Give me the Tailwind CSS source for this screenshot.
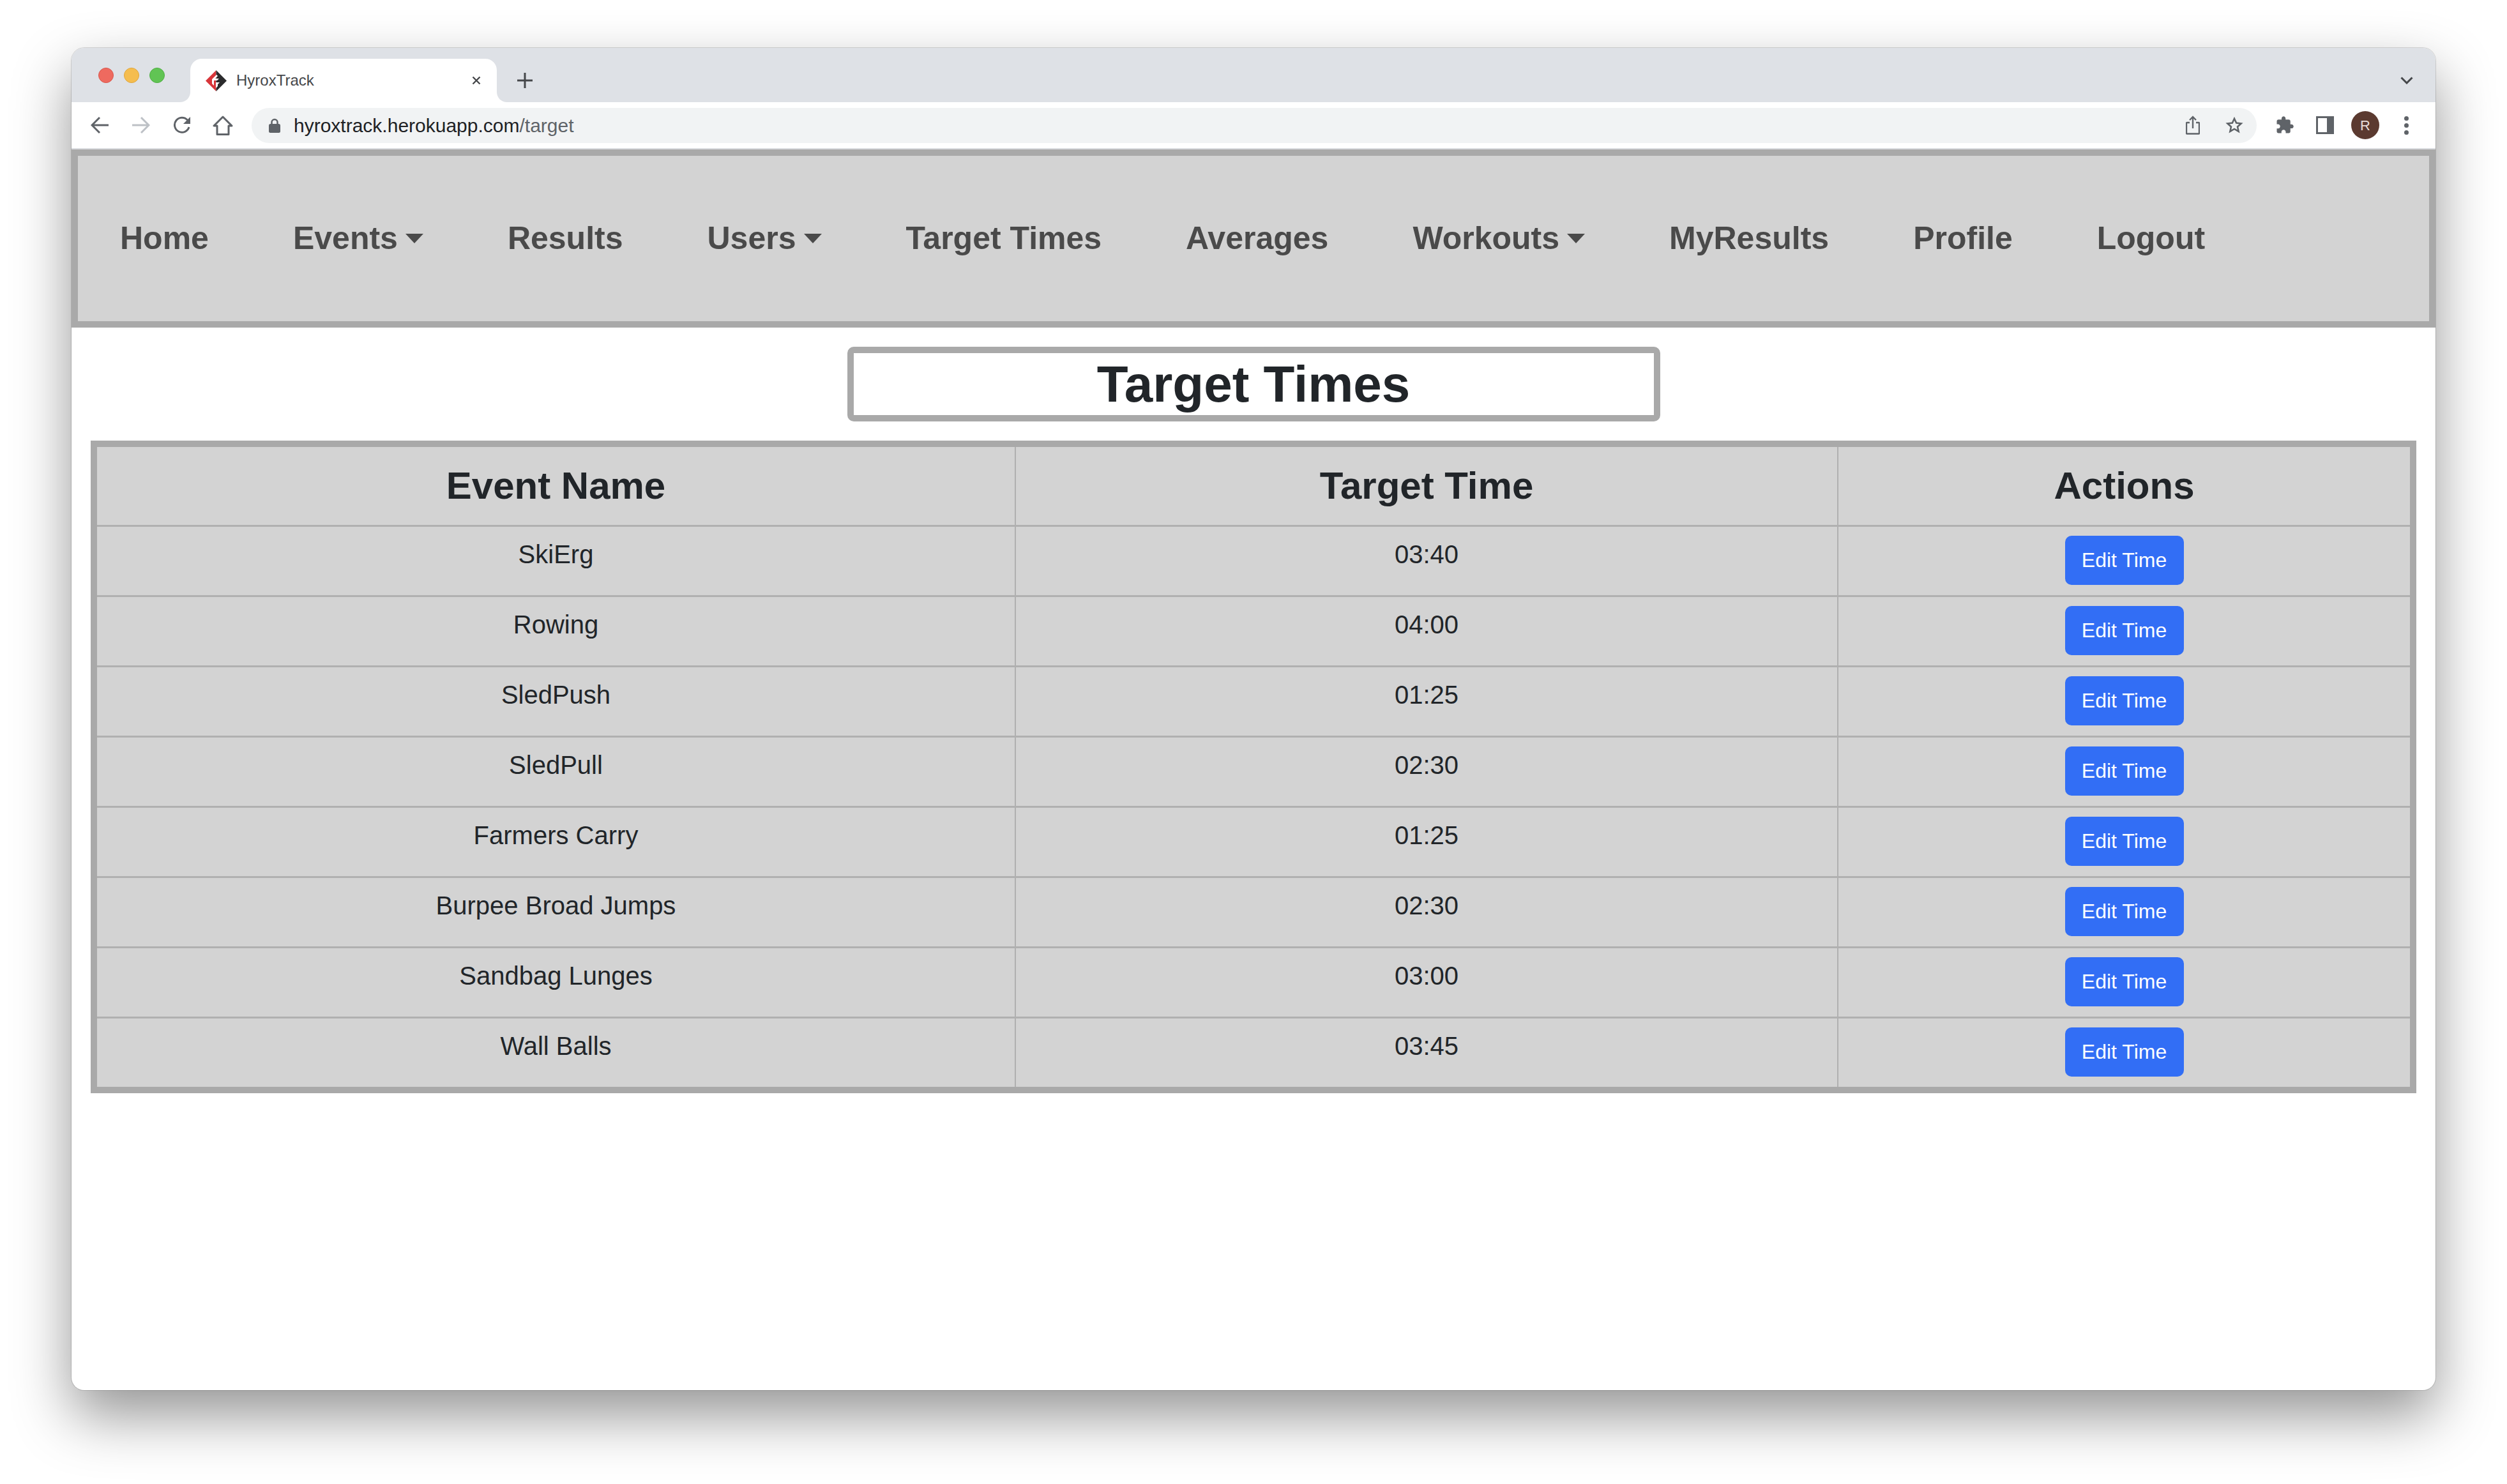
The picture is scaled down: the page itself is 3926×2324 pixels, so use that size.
<!DOCTYPE html>
<html lang="en">
<head>
    <meta charset="UTF-8">
    <title>HyroxTrack</title>
    <script src="https://cdn.jsdelivr.net/npm/@tailwindcss/browser@4"></script>
</head>
<body class="bg-white h-screen overflow-hidden pt-[75px] pl-[112px] font-['Liberation_Sans',Arial,sans-serif]">
    <!-- Browser window -->
    <div class="w-[3702px] h-[2102px] rounded-[20px] overflow-hidden bg-white shadow-[0_40px_90px_rgba(0,0,0,0.42),0_0_0_1px_rgba(0,0,0,0.14)]">

        <!-- Tab strip -->
        <div class="h-[85px] bg-[#dee1e6] flex items-start relative">
            <div class="flex gap-[16px] ml-[42px] mt-[31px]">
                <span class="w-[24px] h-[24px] rounded-full bg-[#ee6a5f] border border-[#d9574d]"></span>
                <span class="w-[24px] h-[24px] rounded-full bg-[#f5bd4f] border border-[#dfa63d]"></span>
                <span class="w-[24px] h-[24px] rounded-full bg-[#61c454] border border-[#4fae43]"></span>
            </div>
            <!-- Active tab -->
            <div class="relative ml-[40px] mt-[17px] w-[480px] h-[68px] bg-white rounded-t-[18px] flex items-center">
                <svg class="absolute -left-[16px] bottom-0" width="16" height="16" viewBox="0 0 16 16"><path d="M16 0v16H0c9 0 16-7 16-16z" fill="#fff"/></svg>
                <svg class="absolute -right-[16px] bottom-0" width="16" height="16" viewBox="0 0 16 16"><path d="M0 0v16h16C7 16 0 9 0 0z" fill="#fff"/></svg>
                <svg class="ml-[24px]" width="33" height="33" viewBox="0 0 33 33">
                    <path d="M16.5 0L0 16.5 16.5 33z" fill="#d8353a"/>
                    <path d="M16.5 0L33 16.5 16.5 33z" fill="#2b2b2d"/>
                    <path d="M17 7l-7 7v7l3 3v-8h5l3-3h-6l4-4zM16 19h6l-3 3v3l-3 3z" fill="#fff"/>
                </svg>
                <span class="ml-[15px] text-[24px] text-[#45474a]">HyroxTrack</span>
                <svg class="absolute left-[440px] top-[26px]" width="16" height="16" viewBox="0 0 16 16"><path d="M2.5 2.5l11 11M13.5 2.5l-11 11" stroke="#45474a" stroke-width="2.4" fill="none"/></svg>
            </div>
            <svg class="ml-[32px] mt-[39px]" width="24" height="24" viewBox="0 0 24 24"><path d="M12 0v24M0 12h24" stroke="#45474a" stroke-width="3" fill="none"/></svg>
            <svg class="absolute right-[35px] top-[45px]" width="20" height="12" viewBox="0 0 20 12"><path d="M1.5 1.5L10 10l8.500-8.500" stroke="#45474a" stroke-width="3" fill="none"/></svg>
        </div>

        <!-- Toolbar -->
        <div class="h-[74px] bg-white border-b-2 border-[#dadce0] flex items-center pl-[30px]">
            <svg width="28" height="28" viewBox="0 0 28 28"><path d="M28 14H3M14 2L2 14l12 12" stroke="#5f6368" stroke-width="3" fill="none"/></svg>
            <svg class="ml-[37px]" width="28" height="28" viewBox="0 0 28 28"><path d="M0 14h25M14 2l12 12-12 12" stroke="#bdc1c6" stroke-width="3" fill="none"/></svg>
            <svg class="ml-[36px]" width="28" height="28" viewBox="0 0 28 28"><path d="M25 17a11.500 11.500 0 1 1-2.500-11" stroke="#5f6368" stroke-width="3" fill="none"/><path d="M27 1v11H16z" fill="#5f6368"/></svg>
            <svg class="ml-[34px]" width="32" height="31" viewBox="0 0 32 31"><path d="M16 2L2 16h5v13.500h18V16h5z" stroke="#5f6368" stroke-width="3" fill="none" stroke-linejoin="round"/></svg>

            <!-- Address bar -->
            <div class="ml-[29px] w-[3140px] h-[55px] rounded-full bg-[#f1f3f4] flex items-center pl-[27px] pr-[21px]">
                <svg width="18" height="23" viewBox="0 0 18 23"><path d="M4.500 10V6.500a4.500 4.500 0 0 1 9 0V10" stroke="#5f6368" stroke-width="2.500" fill="none"/><rect x="0" y="9" width="18" height="14" rx="2.500" fill="#5f6368"/></svg>
                <span class="ml-[21px] text-[30px] text-[#202124]">hyroxtrack.herokuapp.com<span class="text-[#5f6368]">/target</span></span>
                <svg class="ml-auto" width="22" height="30" viewBox="0 0 22 30"><path d="M6 11H2a1 1 0 0 0-1 1v15.500a1 1 0 0 0 1 1h18a1 1 0 0 0 1-1V12a1 1 0 0 0-1-1h-4M11 20V3M6 7l5-5 5 5" stroke="#5f6368" stroke-width="2.400" fill="none"/></svg>
                <svg class="ml-[40px]" width="28" height="28" viewBox="0 0 24 24"><path d="M12 3.200l2.700 5.900 6.400.7-4.800 4.300 1.400 6.300-5.700-3.300-5.700 3.300 1.400-6.300-4.800-4.300 6.400-.7z" stroke="#5f6368" stroke-width="2.200" fill="none"/></svg>
            </div>

            <svg class="ml-[29px]" width="30" height="30" viewBox="0 0 24 24"><path fill="#5f6368" d="M20.500 11H19V7c0-1.100-.9-2-2-2h-4V3.500C13 2.120 11.880 1 10.500 1S8 2.120 8 3.500V5H4c-1.100 0-1.990.9-1.990 2v3.800H3.500c1.490 0 2.700 1.210 2.700 2.700s-1.210 2.700-2.700 2.700H2V20c0 1.100.9 2 2 2h3.800v-1.500c0-1.490 1.210-2.700 2.700-2.700 1.490 0 2.700 1.210 2.700 2.700V22H17c1.100 0 2-.9 2-2v-4h1.500c1.380 0 2.500-1.120 2.500-2.500S21.880 11 20.500 11z"/></svg>
            <div class="ml-[34px] w-[28px] h-[28px] border-[3px] border-r-[11px] border-[#5f6368] bg-white"></div>
            <div class="ml-[27px] w-[44px] h-[44px] rounded-full bg-[#5b3a30] text-[#e8dcd8] text-[22px] flex items-center justify-center">R</div>
            <div class="ml-[39px] flex flex-col gap-[4px]">
                <span class="w-[7px] h-[7px] rounded-full bg-[#5f6368]"></span>
                <span class="w-[7px] h-[7px] rounded-full bg-[#5f6368]"></span>
                <span class="w-[7px] h-[7px] rounded-full bg-[#5f6368]"></span>
            </div>
        </div>

        <!-- Site navbar -->
        <nav class="h-[279px] bg-[#d3d3d3] border-[10px] border-[#a9a9a9] flex items-center pl-[66px] text-[50px] font-bold text-[#4a4a4a]">
            <div class="flex items-center gap-[132px]">
                <a>Home</a>
                <a class="flex items-center">Events<span class="ml-[12px] w-0 h-0 border-x-[14px] border-x-transparent border-t-[15px] border-t-[#4a4a4a]"></span></a>
                <a>Results</a>
                <a class="flex items-center">Users<span class="ml-[12px] w-0 h-0 border-x-[14px] border-x-transparent border-t-[15px] border-t-[#4a4a4a]"></span></a>
                <a>Target Times</a>
                <a>Averages</a>
                <a class="flex items-center">Workouts<span class="ml-[12px] w-0 h-0 border-x-[14px] border-x-transparent border-t-[15px] border-t-[#4a4a4a]"></span></a>
                <a>MyResults</a>
                <a>Profile</a>
                <a>Logout</a>
            </div>
        </nav>

        <!-- Page content -->
        <main class="px-[30px] pt-[30px] text-[#212529]">
            <h1 class="mx-auto w-[1273px] h-[117px] border-[10px] border-[#a9a9a9] rounded-[10px] flex items-center justify-center text-[80px] font-bold">Target Times</h1>

            <div class="mt-[30px] border-[10px] border-[#a9a9a9] bg-[#d3d3d3]">
                <table class="w-full table-fixed text-[40px] text-center">
                    <colgroup>
                        <col class="w-[1438px]">
                        <col class="w-[1288px]">
                        <col>
                    </colgroup>
                    <thead>
                        <tr class="h-[123px] text-[60px]">
                            <th class="font-bold">Event Name</th>
                            <th class="font-bold border-l-2 border-[#b0b0b0]">Target Time</th>
                            <th class="font-bold border-l-2 border-[#b0b0b0]">Actions</th>
                        </tr>
                    </thead>
                    <tbody>
                        <tr class="h-[110px] align-top border-t-[3px] border-[#b0b0b0]">
                            <td class="pt-[13px]">SkiErg</td>
                            <td class="pt-[13px] border-l-2 border-[#b0b0b0]">03:40</td>
                            <td class="pt-[14px] border-l-2 border-[#b0b0b0]"><button class="block mx-auto w-[186px] h-[77px] rounded-[10px] bg-[#326ef5] text-white text-[32px]">Edit Time</button></td>
                        </tr>
                        <tr class="h-[110px] align-top border-t-[3px] border-[#b0b0b0]">
                            <td class="pt-[13px]">Rowing</td>
                            <td class="pt-[13px] border-l-2 border-[#b0b0b0]">04:00</td>
                            <td class="pt-[14px] border-l-2 border-[#b0b0b0]"><button class="block mx-auto w-[186px] h-[77px] rounded-[10px] bg-[#326ef5] text-white text-[32px]">Edit Time</button></td>
                        </tr>
                        <tr class="h-[110px] align-top border-t-[3px] border-[#b0b0b0]">
                            <td class="pt-[13px]">SledPush</td>
                            <td class="pt-[13px] border-l-2 border-[#b0b0b0]">01:25</td>
                            <td class="pt-[14px] border-l-2 border-[#b0b0b0]"><button class="block mx-auto w-[186px] h-[77px] rounded-[10px] bg-[#326ef5] text-white text-[32px]">Edit Time</button></td>
                        </tr>
                        <tr class="h-[110px] align-top border-t-[3px] border-[#b0b0b0]">
                            <td class="pt-[13px]">SledPull</td>
                            <td class="pt-[13px] border-l-2 border-[#b0b0b0]">02:30</td>
                            <td class="pt-[14px] border-l-2 border-[#b0b0b0]"><button class="block mx-auto w-[186px] h-[77px] rounded-[10px] bg-[#326ef5] text-white text-[32px]">Edit Time</button></td>
                        </tr>
                        <tr class="h-[110px] align-top border-t-[3px] border-[#b0b0b0]">
                            <td class="pt-[13px]">Farmers Carry</td>
                            <td class="pt-[13px] border-l-2 border-[#b0b0b0]">01:25</td>
                            <td class="pt-[14px] border-l-2 border-[#b0b0b0]"><button class="block mx-auto w-[186px] h-[77px] rounded-[10px] bg-[#326ef5] text-white text-[32px]">Edit Time</button></td>
                        </tr>
                        <tr class="h-[110px] align-top border-t-[3px] border-[#b0b0b0]">
                            <td class="pt-[13px]">Burpee Broad Jumps</td>
                            <td class="pt-[13px] border-l-2 border-[#b0b0b0]">02:30</td>
                            <td class="pt-[14px] border-l-2 border-[#b0b0b0]"><button class="block mx-auto w-[186px] h-[77px] rounded-[10px] bg-[#326ef5] text-white text-[32px]">Edit Time</button></td>
                        </tr>
                        <tr class="h-[110px] align-top border-t-[3px] border-[#b0b0b0]">
                            <td class="pt-[13px]">Sandbag Lunges</td>
                            <td class="pt-[13px] border-l-2 border-[#b0b0b0]">03:00</td>
                            <td class="pt-[14px] border-l-2 border-[#b0b0b0]"><button class="block mx-auto w-[186px] h-[77px] rounded-[10px] bg-[#326ef5] text-white text-[32px]">Edit Time</button></td>
                        </tr>
                        <tr class="h-[109px] align-top border-t-[3px] border-[#b0b0b0]">
                            <td class="pt-[13px]">Wall Balls</td>
                            <td class="pt-[13px] border-l-2 border-[#b0b0b0]">03:45</td>
                            <td class="pt-[14px] border-l-2 border-[#b0b0b0]"><button class="block mx-auto w-[186px] h-[77px] rounded-[10px] bg-[#326ef5] text-white text-[32px]">Edit Time</button></td>
                        </tr>
                    </tbody>
                </table>
            </div>
        </main>
    </div>
</body>
</html>
